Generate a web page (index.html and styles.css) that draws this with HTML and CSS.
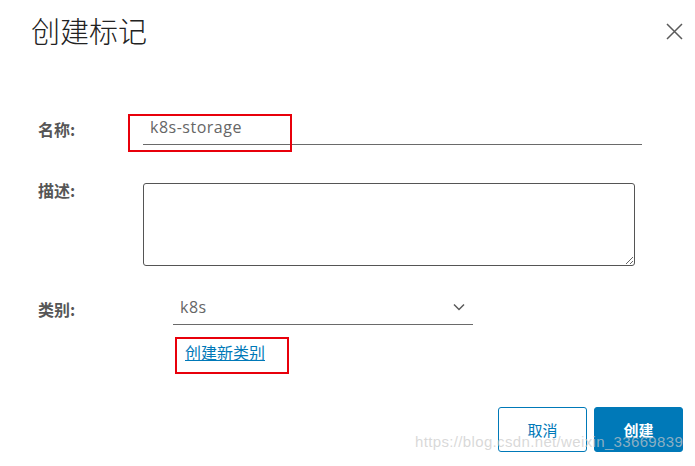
FILE: index.html
```html
<!DOCTYPE html>
<html>
<head>
<meta charset="utf-8">
	<title>创建标记</title>
	<link rel="stylesheet" href="styles.css">
</head>
<body>
	<div class="modal">
		<div class="modal-header">
			<h3 class="modal-title">创建标记</h3>
			<span class="close">
				<svg width="17" height="17" viewBox="0 0 17 17"><path d="M1 1L16 16M16 1L1 16" stroke="#5a5a5a" stroke-width="1.5" fill="none"/></svg>
			</span>
		</div>
		<div class="modal-body">
			<div class="row row-name">
				<label class="label">名称:</label>
				<div class="input-wrap">
					<input type="text" class="text-input" value="k8s-storage">
					<span class="mark mark-name"></span>
				</div>
			</div>
			<div class="row row-desc">
				<label class="label">描述:</label>
				<textarea class="textarea"></textarea>
			</div>
			<div class="row row-cat">
				<label class="label">类别:</label>
				<div class="select">
					<span class="select-value">k8s</span>
					<svg width="12" height="8" viewBox="0 0 12 8"><path d="M1 1.5L6 6.5L11 1.5" stroke="#5a5a5a" stroke-width="1.5" fill="none"/></svg>
				</div>
			</div>
			<div class="row-link">
				<span class="link-wrap">
					<a href="#" class="link">创建新类别</a>
					<span class="mark mark-link"></span>
				</span>
			</div>
		</div>
		<div class="modal-footer">
			<button class="btn btn-outline">取消</button>
			<button class="btn btn-primary">创建</button>
		</div>
		<div class="watermark">https://blog.csdn.net/weixin_33669839</div>
	</div>
</body>
</html>
```
FILE: styles.css
```css
body{margin:0;padding:0;background:#fff;font-family:"Noto Sans CJK SC","Open Sans",sans-serif;}

.modal{position:relative;width:695px;height:466px;overflow:hidden;}

.modal-header{display:flex;justify-content:space-between;align-items:flex-start;padding:10px 12px 0 31px;height:40px;}
.modal-title{margin:0;font-size:29px;line-height:40px;font-weight:300;color:#222;}
.close{display:block;width:17px;height:17px;margin-top:13px;cursor:pointer;}
.close svg{display:block;}

.modal-body{padding-left:38px;}
.row{display:flex;}
.label{width:105px;flex:none;font-size:16px;font-weight:bold;color:#565656;}

.row-name{margin-top:62px;align-items:center;height:33px;}
.input-wrap{position:relative;width:499px;height:33px;}
.text-input{box-sizing:border-box;width:100%;height:33px;border:none;border-bottom:1px solid #6a6a6a;padding:0 0 2px 7px;font-family:"Open Sans",sans-serif;font-size:16px;letter-spacing:0.5px;color:#666;outline:none;background:none;}

.row-desc{margin-top:38px;align-items:flex-start;}
.row-desc .label{line-height:20px;margin-top:-3px;}
.textarea{box-sizing:border-box;width:492px;height:83px;border:1px solid #555;border-radius:3px;margin:0;padding:4px 6px;font-family:"Open Sans",sans-serif;font-size:14px;}

.row-cat{margin-top:26px;align-items:center;}
.select{box-sizing:border-box;width:300px;height:33px;margin-left:30px;display:flex;align-items:center;justify-content:space-between;border-bottom:1px solid #6a6a6a;padding:0 8px 0 7px;}
.select-value{font-family:"Open Sans",sans-serif;font-size:16px;letter-spacing:0.5px;color:#666;padding-bottom:2px;}
.select svg{display:block;margin-bottom:2px;}

.row-link{margin-top:17px;padding-left:147px;height:20px;line-height:20px;}
.link-wrap{position:relative;display:inline-block;}
.link{font-size:16px;color:#0079b8;text-decoration:underline;}

.mark{position:absolute;box-sizing:border-box;border:2px solid #e8000b;}
.mark-name{left:-15px;top:2px;width:164px;height:38px;}
.mark-link{left:-10px;top:-5px;width:114px;height:37px;}

.modal-footer{display:flex;justify-content:flex-end;gap:7px;padding-right:12px;margin-top:45px;}
.btn{box-sizing:border-box;width:89px;height:45px;border-radius:3px;font-family:"Noto Sans CJK SC",sans-serif;font-size:15px;cursor:pointer;padding:0;}
.btn-outline{background:#fff;border:1px solid #0079b8;color:#0079b8;}
.btn-primary{background:#0079b8;border:1px solid #0079b8;color:#fff;font-weight:bold;}

.watermark{position:absolute;left:415px;top:433px;font-family:"Liberation Sans",Arial,sans-serif;font-size:15px;letter-spacing:0.35px;color:rgba(200,200,200,0.7);white-space:nowrap;}
```
